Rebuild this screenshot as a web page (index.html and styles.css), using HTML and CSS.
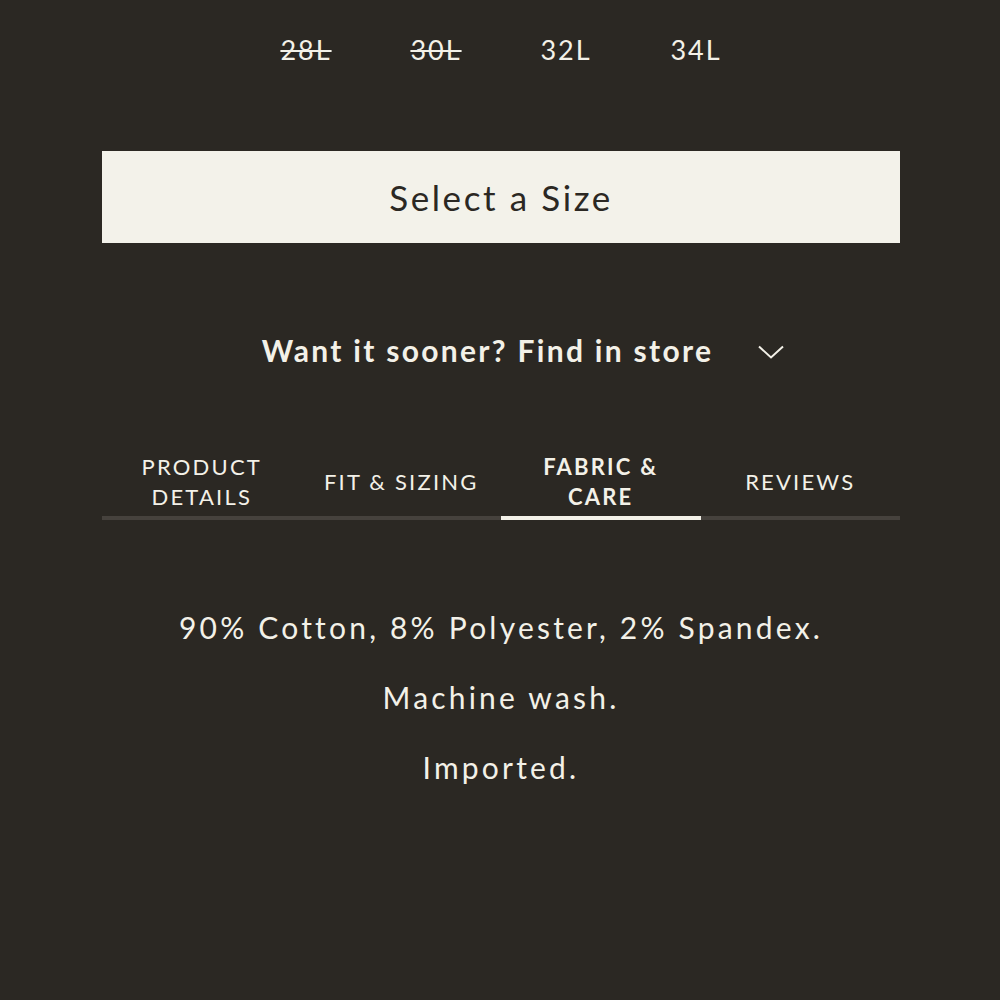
FILE: index.html
```html
<!DOCTYPE html>
<html lang="en">
<head>
	<meta charset="UTF-8">
	<title>Fabric &amp; Care</title>
	<link rel="stylesheet" href="styles.css">
</head>
<body>
	<div class="product">
		<ul class="sizes">
			<li class="gone">28L</li>
			<li class="gone">30L</li>
			<li>32L</li>
			<li>34L</li>
		</ul>
		<button class="select">Select a Size</button>
		<div class="store">
			<span>Want it sooner? Find in store</span>
			<svg width="26" height="14" viewBox="0 0 26 14"><path d="M1 1.5 L13 12.5 L25 1.5" fill="none" stroke="#f3f1e8" stroke-width="2"/></svg>
		</div>
		<ul class="tabs">
			<li>Product<br>Details</li>
			<li>Fit &amp; Sizing</li>
			<li class="on">Fabric &amp;<br>Care</li>
			<li>Reviews</li>
		</ul>
		<div class="care">
			<p>90% Cotton, 8% Polyester, 2% Spandex.</p>
			<p>Machine wash.</p>
			<p>Imported.</p>
		</div>
	</div>
</body>
</html>
```

FILE: styles.css
```css
*{margin: 0;padding: 0;}
body{background: #2b2823;color: #f3f1e8;font-family: "Lato", "Noto Sans", sans-serif;}
li{list-style: none;}
.product{width: 798px;margin: 0 auto;padding-left: 2px;}
.sizes{display: flex;justify-content: center;padding-top: 33px;height: 151px;box-sizing: border-box;}
.sizes li{width: 130px;height: 34px;text-align: center;font-size: 27px;letter-spacing: 2px;line-height: 34px;}
.sizes li.gone{text-decoration: line-through;text-decoration-thickness: 2px;}
.select{display: block;width: 798px;height: 92px;border: 0;background: #f3f2ea;color: #2b2823;font-family: inherit;font-size: 35px;letter-spacing: 2.6px;}
.store{display: flex;justify-content: center;align-items: center;gap: 45px;margin-top: 84px;height: 46px;font-size: 30px;font-weight: 700;letter-spacing: 2.3px;padding-left: 44px;}
.store svg{margin-top: 4px;}
.tabs{display: flex;margin-top: 75px;border-bottom: 4px solid #46423d;}
.tabs li{flex: 1;height: 72px;display: flex;align-items: center;justify-content: center;text-align: center;text-transform: uppercase;font-size: 22px;letter-spacing: 2.2px;line-height: 30px;margin-bottom: -4px;border-bottom: 4px solid transparent;box-sizing: border-box;}
.tabs li.on{font-weight: 700;border-bottom-color: #f3f1e8;}
.care{text-align: center;font-size: 30px;letter-spacing: 3.2px;padding-top: 89px;}
.care p{line-height: 36px;margin-bottom: 34px;}
```
